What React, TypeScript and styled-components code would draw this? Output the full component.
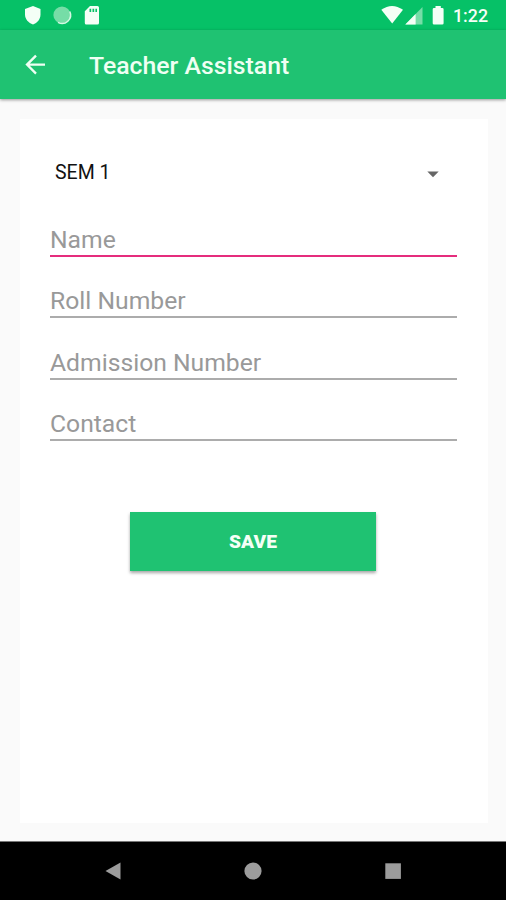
import React from "react";
import styled, { createGlobalStyle } from "styled-components";

const GlobalStyle = createGlobalStyle`
  *, *::before, *::after { box-sizing: border-box; }
  body { margin: 0; background: #fafafa; font-family: Roboto, sans-serif; }
`;

const Screen = styled.div`
  display: flex;
  flex-direction: column;
  width: 506px;
  height: 900px;
  overflow: hidden;
  background: #fafafa;
`;

const StatusBar = styled.header`
  display: flex;
  justify-content: space-between;
  height: 30px;
  flex: none;
  background: #06c167;
`;

const StatusIcons = styled.svg`
  display: block;
  height: 30px;
`;

const StatusEnd = styled.div`
  display: flex;
  width: 126px;
`;

const Clock = styled.span`
  margin-left: 3px;
  color: #f4fff6;
  font-size: 17.8px;
  font-weight: 500;
  line-height: 32px;
`;

const AppBar = styled.div`
  display: flex;
  align-items: center;
  height: 69px;
  flex: none;
  padding-left: 25px;
  background: #1fc272;
  box-shadow: 0 1px 3px rgba(0, 0, 0, 0.4);
`;

const BackButton = styled.button`
  display: flex;
  width: 21px;
  height: 22px;
  padding: 0;
  border: 0;
  background: none;
`;

const Title = styled.h1`
  margin: 2px 0 0 43px;
  color: #effff3;
  font-size: 24.8px;
  font-weight: 500;
  line-height: 30px;
`;

const Content = styled.main`
  flex: 1;
  display: flex;
  padding: 20px 18px 18px 20px;
`;

const Card = styled.form`
  flex: 1;
  display: flex;
  flex-direction: column;
  padding: 38px 31px 0 30px;
  background: #fff;
`;

const Spinner = styled.div`
  display: flex;
  align-items: center;
  justify-content: space-between;
  height: 30px;
  margin-bottom: 31px;
  padding: 0 18px 0 5px;
  color: #111;
  font-size: 19.5px;
`;

const Caret = styled.svg`
  display: block;
  margin-top: 4px;
`;

const Field = styled.input<{ $active?: boolean }>`
  width: 100%;
  height: 39px;
  margin-bottom: 22.3px;
  padding: 6px 0 0;
  border: 0;
  border-bottom: 2px solid ${(p) => (p.$active ? "#e52d7d" : "#acacac")};
  border-radius: 0;
  outline: 0;
  background: transparent;
  font-family: inherit;
  font-size: 24.7px;
  &::placeholder { color: #999; opacity: 1; }
`;

const SaveButton = styled.button`
  align-self: center;
  width: 246px;
  height: 59px;
  margin: 48.8px 1px 0 0;
  border: 0;
  background: #1fc272;
  box-shadow: 0 2px 3px rgba(0, 0, 0, 0.35);
  color: #f4fff6;
  font-family: inherit;
  font-size: 19.2px;
  font-weight: 900;
`;

const NavBar = styled.nav`
  display: flex;
  align-items: center;
  justify-content: center;
  gap: 122px;
  height: 59px;
  flex: none;
  border-top: 1px solid #777;
  background: #000;
`;

const NavIcon = styled.svg`
  display: block;
  width: 18px;
  height: 18px;
  fill: #9c9c9c;
`;

const fields = ["Name", "Roll Number", "Admission Number", "Contact"];

export default function App() {
  return (
    <>
      <GlobalStyle />
      <Screen>
        <StatusBar>
          <StatusIcons width="110" viewBox="0 0 110 30">
            <path d="M33 6L40.5 9V14.5C40.5 19.3 37.4 22.8 33 24.5C28.4 22.8 25 19.3 25 14.5V9Z" fill="#f4fff6" />
            <circle cx="62" cy="15" r="8.6" fill="#76dda7" />
            <path d="M69.8 11.5A8.4 8.4 0 0 1 58 22.3" fill="none" stroke="#d5f8e3" strokeWidth="1.5" />
            <path
              d="M90 6H97.4Q99 6 99 7.6V23Q99 24.5 97.4 24.5H86.3Q84.8 24.5 84.8 23V11.2ZM89.5 8.7V12H91.2V8.7ZM92.5 8.7V12H94.2V8.7ZM95.4 8.7V12H97V8.7Z"
              fill="#f4fff6"
              fillRule="evenodd"
            />
          </StatusIcons>
          <StatusEnd>
            <StatusIcons width="70" viewBox="380 0 70 30">
              <path d="M381.3 9.8Q392 2.2 403 9.8L392.2 23.4Z" fill="#f4fff6" />
              <path d="M422.5 7V24.5H405.3Z" fill="#76dda7" />
              <path d="M415.6 14V24.5H405.3Z" fill="#f4fff6" />
              <path d="M435.5 6H440.8V8H442.3Q443.6 8 443.6 9.3V23.2Q443.6 24.5 442.3 24.5H434Q432.7 24.5 432.7 23.2V9.3Q432.7 8 434 8H435.5Z" fill="#f4fff6" />
            </StatusIcons>
            <Clock>1:22</Clock>
          </StatusEnd>
        </StatusBar>
        <AppBar>
          <BackButton type="button" aria-label="Back">
            <svg width="21" height="22" viewBox="0 0 21 22" fill="none" stroke="#effff3" strokeWidth="2.3">
              <path d="M20 10.6H2.3M11 1.6L2 10.6L11 19.6" />
            </svg>
          </BackButton>
          <Title>Teacher Assistant</Title>
        </AppBar>
        <Content>
          <Card>
            <Spinner>
              <span>SEM 1</span>
              <Caret width="12" height="7" viewBox="0 0 12 7">
                <path d="M.3 .5H11.7L6 6.3Z" fill="#666" />
              </Caret>
            </Spinner>
            {fields.map((name, i) => (
              <Field key={name} placeholder={name} aria-label={name} $active={i === 0} />
            ))}
            <SaveButton type="button">SAVE</SaveButton>
          </Card>
        </Content>
        <NavBar>
          <NavIcon viewBox="0 0 18 18"><path d="M1.5 9L16.5 .5V17.5Z" /></NavIcon>
          <NavIcon viewBox="0 0 18 18"><circle cx="9" cy="9" r="8.6" /></NavIcon>
          <NavIcon viewBox="0 0 18 18"><rect x="1.3" y="1.3" width="15.6" height="15.6" /></NavIcon>
        </NavBar>
      </Screen>
    </>
  );
}
